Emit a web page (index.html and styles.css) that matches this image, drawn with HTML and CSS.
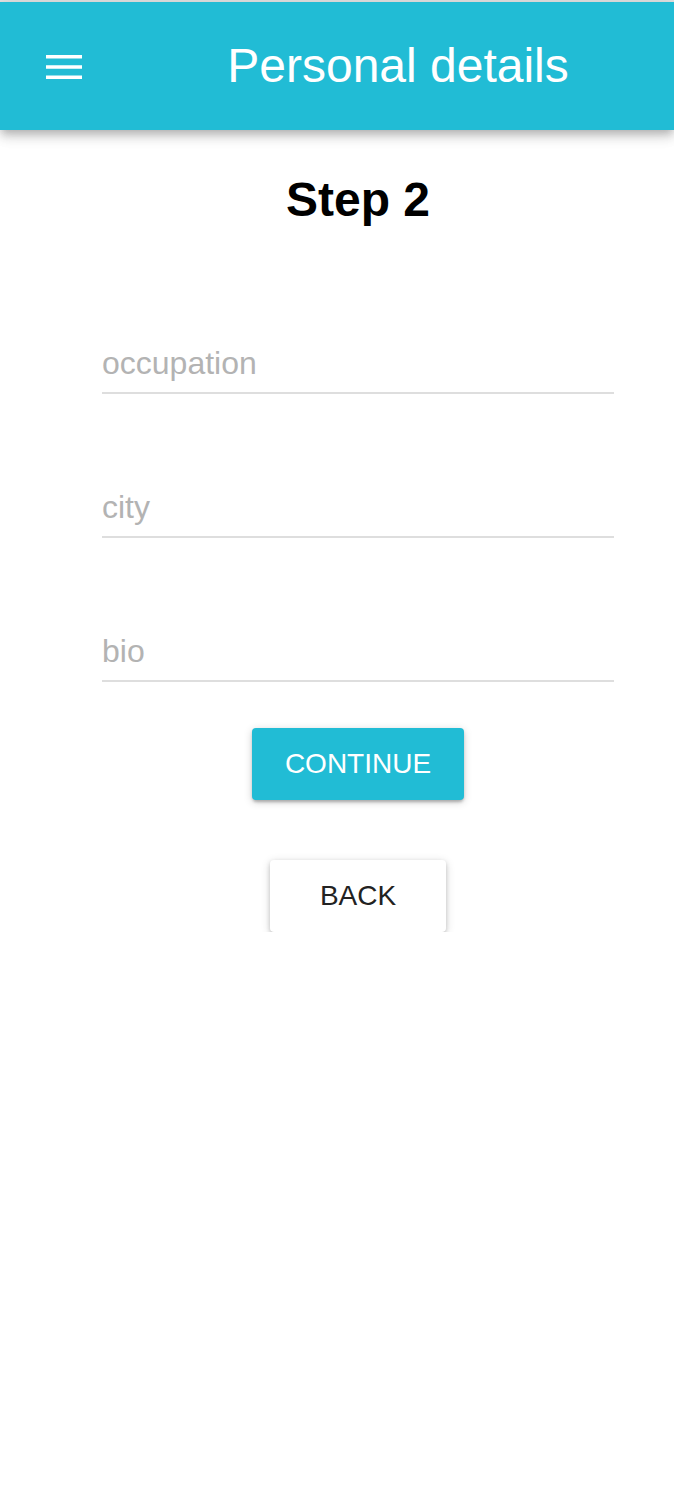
FILE: index.html
```html
<!DOCTYPE html>
<html lang="en">
<head>
<meta charset="utf-8">
<title>Personal details</title>
<link rel="stylesheet" href="styles.css">
</head>
<body>
<div class="topline"></div>
<div class="page">
  <header class="appbar">
    <div class="menu">
      <svg class="menu-icon" width="36" height="24" viewBox="0 0 36 24" aria-hidden="true">
        <rect x="0" y="0" width="36" height="3.5" fill="#fff"/>
        <rect x="0" y="10.25" width="36" height="3.5" fill="#fff"/>
        <rect x="0" y="20.5" width="36" height="3.5" fill="#fff"/>
      </svg>
    </div>
    <h1 class="title">Personal details</h1>
  </header>
  <main class="content">
    <h2 class="step">Step 2</h2>
    <form class="form">
      <div class="field"><input class="input" type="text" placeholder="occupation"></div>
      <div class="field"><input class="input" type="text" placeholder="city"></div>
      <div class="field"><input class="input" type="text" placeholder="bio"></div>
      <div class="actions">
        <button type="button" class="btn btn-primary">CONTINUE</button>
        <button type="button" class="btn btn-secondary">BACK</button>
      </div>
    </form>
  </main>
</div>
</body>
</html>
```
FILE: styles.css
```css
html, body {
  margin: 0;
  padding: 0;
  background: #fff;
}
body {
  font-family: "Liberation Sans", Arial, sans-serif;
}
.topline {
  height: 2px;
  background: #e0e0e0;
}
.page {
  width: 674px;
}
.appbar {
  height: 128px;
  background: #21bcd5;
  display: flex;
  align-items: center;
  box-shadow: 0 4px 8px -2px rgba(0,0,0,0.2), 0 8px 10px 0 rgba(0,0,0,0.12), 0 2px 20px 0 rgba(0,0,0,0.08);
  position: relative;
  z-index: 1;
}
.menu {
  width: 80px;
  flex-shrink: 0;
  padding-left: 46px;
  box-sizing: border-box;
  display: flex;
  align-items: center;
}
.menu-icon {
  display: block;
  flex-shrink: 0;
  margin-top: 2px;
}
.title {
  flex: 1;
  margin: 0;
  padding-left: 42px;
  text-align: center;
  color: #fff;
  font-size: 48px;
  font-weight: 400;
  line-height: 56px;
  white-space: nowrap;
}
.content {
  display: flex;
  flex-direction: column;
  align-items: center;
  padding-left: 42px;
}
.step {
  margin: 42px 0 0;
  font-size: 48px;
  font-weight: 700;
  line-height: 56px;
  color: #000;
}
.form {
  width: 512px;
  display: flex;
  flex-direction: column;
  margin-top: 115px;
}
.field + .field {
  margin-top: 93px;
}
.input {
  display: block;
  width: 100%;
  box-sizing: content-box;
  margin: 0;
  padding: 1px 0 10px;
  height: 38px;
  line-height: 38px;
  border: 0;
  border-bottom: 2px solid #dedede;
  outline: none;
  background: transparent;
  font-family: "Liberation Sans", Arial, sans-serif;
  font-size: 32px;
  color: #222;
}
.input::placeholder {
  color: #b3b3b3;
  opacity: 1;
}
.actions {
  display: flex;
  flex-direction: column;
  align-items: center;
  margin-top: 46px;
}
.btn {
  height: 72px;
  min-width: 176px;
  padding: 0 33px;
  border: 0;
  border-radius: 4px;
  font-family: "Liberation Sans", Arial, sans-serif;
  font-size: 28px;
  line-height: 72px;
  cursor: pointer;
}
.btn-primary {
  background: #21bcd5;
  color: #fff;
  box-shadow: 0 2px 3px 0 rgba(0,0,0,0.14), 0 4px 3px -2px rgba(0,0,0,0.12), 0 2px 8px 0 rgba(0,0,0,0.18);
}
.btn-secondary {
  margin-top: 60px;
  background: #fff;
  color: #222;
  box-shadow: 0 2px 4px 0 rgba(0,0,0,0.16), 0 4px 3px -2px rgba(0,0,0,0.12), 0 2px 10px 0 rgba(0,0,0,0.16);
}
```
